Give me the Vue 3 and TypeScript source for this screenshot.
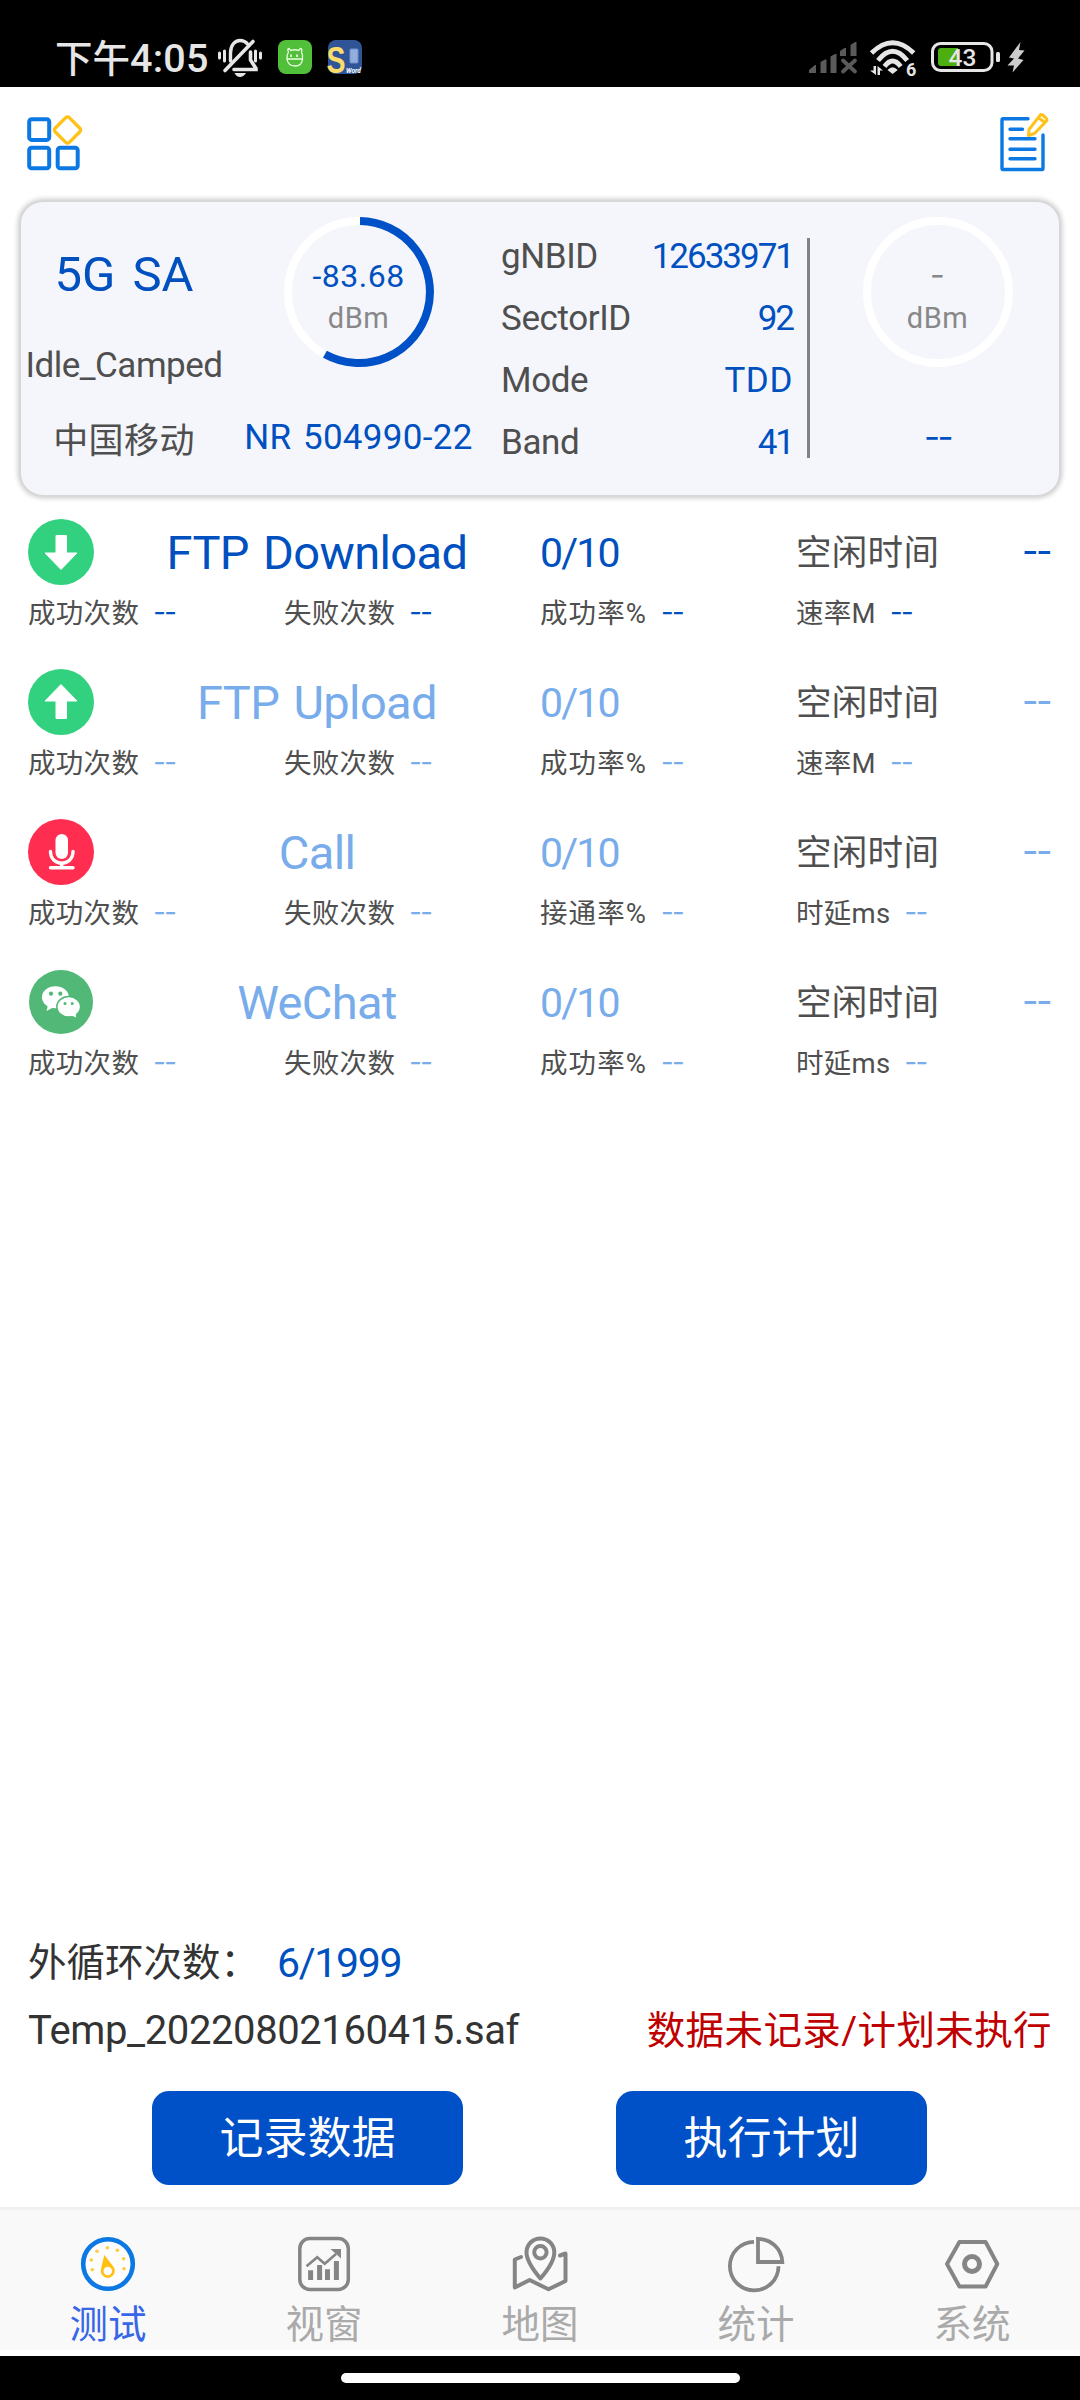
<script setup lang="ts">
interface Task {
  icon: 'down' | 'up' | 'mic' | 'wechat'
  name: string
  active: boolean
  cells: string[]
}

const tasks: Task[] = [
  { icon: 'down', name: 'FTP Download', active: true, cells: ['成功次数', '失败次数', '成功率%', '速率M'] },
  { icon: 'up', name: 'FTP Upload', active: false, cells: ['成功次数', '失败次数', '成功率%', '速率M'] },
  { icon: 'mic', name: 'Call', active: false, cells: ['成功次数', '失败次数', '接通率%', '时延ms'] },
  { icon: 'wechat', name: 'WeChat', active: false, cells: ['成功次数', '失败次数', '成功率%', '时延ms'] },
]

const cellInfo = [
  { key: 'gNBID', value: '12633971' },
  { key: 'SectorID', value: '92' },
  { key: 'Mode', value: 'TDD' },
  { key: 'Band', value: '41' },
]

const tabs = ['测试', '视窗', '地图', '统计', '系统']
</script>

<template>
  <div class="phone">
    <div class="status">
      <span class="clock">下午<span class="clock-digits">4:05</span></span>
      <svg class="bell" width="46" height="42" viewBox="217 37 46 42" fill="none" stroke="#e6e6e6" stroke-width="3" stroke-linecap="round">
        <path d="M230.500 61V53C230.500 45 235 40.500 240 40.500C243.500 40.500 246 42 248 44.500" stroke-width="3.400" />
        <path d="M225 70.500L253 41.500" stroke-width="3.600" />
        <path d="M250.500 52V60L256 68.500V69.500H234" stroke-width="3.600" />
        <path d="M234.500 73H246Q243.500 77 240 77Q236.500 77 234.500 73Z" fill="#e6e6e6" stroke="none" />
        <path d="M219.500 53V58M224.500 51V61M255.500 51V61M260.500 53V58" />
      </svg>
      <svg class="app1" width="34" height="34" viewBox="0 0 34 34">
        <rect width="34" height="34" rx="8" fill="#52bf3a" />
        <path d="M10.500 12Q9 9 11 8.500L13 10.500Q17 9 20.500 10.500L22.500 8.500Q24.500 9 23.500 12Q25 15 24.500 19H9Q8.500 15 10.500 12ZM9 19Q10 26 17 26Q24 26 24.500 19" fill="none" stroke="#e9ffe0" stroke-width="1.300" />
        <path d="M13 14.500V17M19 14.500V17" stroke="#fff" stroke-width="1.500" />
      </svg>
      <svg class="app2" width="34" height="34" viewBox="0 0 34 34">
        <rect width="34" height="34" rx="8" fill="#2f5597" />
        <rect x="22" y="9" width="8" height="14" rx="1" fill="#93aede" stroke="#6f90cc" />
        <text x="-1.500" y="33" font-size="36" textLength="19" lengthAdjust="spacingAndGlyphs" font-weight="700" fill="#fbdc6b" font-family="Liberation Sans, sans-serif">S</text>
        <text x="18" y="33" font-size="6.500" font-weight="700" font-style="italic" fill="#fff" font-family="Roboto, sans-serif">Word</text>
      </svg>
      <span class="grow"></span>
      <svg width="218" height="42" viewBox="808 37 218 42" fill="#e6e6e6">
        <g fill="#5a5a5a">
          <path d="M809 73V70L815 65H816V73ZM820.500 73V62L825 59.500H826.500V73ZM830.500 73V56.500L835 54H836.500V73ZM840 56V51L844.500 48H846V56ZM850.500 56V45L855 42H856.500V56Z" />
          <path d="M843 60.500L855 71.500M855 60.500L843 71.500" stroke="#5a5a5a" stroke-width="3.800" stroke-linecap="round" />
        </g>
        <g fill="none" stroke="#e6e6e6" stroke-width="4.800">
          <path d="M871.500 53Q892.600 32.500 913.700 53" />
          <path d="M878 60.500Q892.600 42 907.200 60.500" />
          <path d="M884.500 66.500Q892.600 55.500 900.700 66.500" />
        </g>
        <path d="M887.500 70Q892.600 64.500 897.700 70L892.600 74Z" />
        <path d="M873.500 66H876V75L870 70.500H873.500ZM877.500 75V66L883 70.500H880V75Z" />
        <text x="906" y="75.500" font-size="18" font-weight="700" font-family="Roboto, sans-serif">6</text>
        <rect x="932.500" y="43.500" width="59.500" height="27" rx="8" fill="none" stroke="#e6e6e6" stroke-width="3" />
        <path d="M941 48H958V66H941Q938 66 938 63V51Q938 48 941 48Z" fill="#4caf10" />
        <text x="948.500" y="65.500" font-size="24.500" font-weight="500" font-family="Roboto, sans-serif">43</text>
        <rect x="996" y="52" width="4" height="10" rx="1.500" />
        <path d="M1020.500 42L1009 57.500L1014 58.500L1007.500 65.500H1014L1012.500 72.500L1023.500 60L1018 58.500L1024.500 50.500L1019 50Z" fill="#ccc" />
      </svg>
    </div>

    <div class="toolbar">
      <svg width="58" height="60" viewBox="26 113 58 60" fill="none" stroke="#0b78e3" stroke-width="4">
        <rect x="29.200" y="119.300" width="20" height="20.600" rx="2.500" />
        <rect x="29.200" y="147.700" width="20" height="20.600" rx="2.500" />
        <rect x="57.700" y="147.700" width="20" height="20.600" rx="2.500" />
        <rect x="57.500" y="120" width="20" height="20" rx="2.500" transform="rotate(45 67.500 130)" stroke="#ffc21a" stroke-width="3.400" />
      </svg>
      <svg width="50" height="60" viewBox="1000 113 50 60" fill="none" stroke="#0b78e3" stroke-width="3.400" stroke-linecap="round" stroke-linejoin="round">
        <path d="M1028 118.800H1003Q1002 118.800 1002 120V168.300Q1002 169.500 1003 169.500H1042Q1043 169.500 1043 168.300V135" />
        <path d="M1010 129.300H1022.500M1010 138.800H1035M1010 149.300H1035M1010 158.800H1035" />
        <path d="M1028.500 135.500L1029 129.500L1040 115.300Q1041 114 1042.500 115L1046 118Q1047.500 119.500 1046.500 121L1034.500 133.500ZM1039.500 118.500L1043.500 121.500" stroke="#ffc21a" stroke-width="3" />
      </svg>
    </div>

    <section class="card">
      <div class="col-net">
        <div class="net">5G SA</div>
        <div class="state">Idle_Camped</div>
        <div class="carrier">中国移动</div>
      </div>
      <div class="col-gauge">
        <div class="gauge">
          <svg class="ring" width="150" height="150" viewBox="0 0 150 150" fill="none" stroke-width="8">
            <circle cx="75" cy="75" r="71" stroke="#fff" />
            <path d="M76 4A71 71 0 1 1 40.900 137.300" stroke="#0050c8" />
          </svg>
          <div class="level">-83.68</div>
          <div class="unit">dBm</div>
        </div>
        <div class="arfcn">NR 504990-22</div>
      </div>
      <div class="col-info">
        <div v-for="i in cellInfo" :key="i.key" class="kv">
          <span class="key">{{ i.key }}</span><span class="val" :class="{ wide: i.key === 'Mode' }">{{ i.value }}</span>
        </div>
      </div>
      <div class="rule"></div>
      <div class="col-gauge second">
        <div class="gauge">
          <svg class="ring" width="150" height="150" viewBox="0 0 150 150" fill="none" stroke-width="8">
            <circle cx="75" cy="75" r="71" stroke="#fff" />
          </svg>
          <div class="level none">-</div>
          <div class="unit">dBm</div>
        </div>
        <div class="arfcn dash">--</div>
      </div>
    </section>

    <section class="tasks">
      <div v-for="t in tasks" :key="t.name" class="task" :class="{ active: t.active }">
        <div class="head">
          <svg width="66" height="66" viewBox="0 0 66 66">
            <template v-if="t.icon === 'down'">
              <circle cx="33" cy="33" r="33" fill="#31d17f" />
              <path d="M28 16.500H38.500V34H49L33 50.500L17 34H28Z" fill="#fff" stroke="#fff" stroke-linejoin="round" />
            </template>
            <template v-else-if="t.icon === 'up'">
              <circle cx="33" cy="33" r="33" fill="#31d17f" />
              <path d="M28 49.500H38.500V32H49L33 15.500L17 32H28Z" fill="#fff" stroke="#fff" stroke-linejoin="round" />
            </template>
            <template v-else-if="t.icon === 'mic'">
              <circle cx="33" cy="33" r="33" fill="#ff2d50" />
              <rect x="27.500" y="15" width="12.500" height="25" rx="6.250" fill="#fff" />
              <path d="M22.500 32.500C22.500 48 45 48 45 32.500M33.700 44V48M22.500 48.700H45" fill="none" stroke="#fff" stroke-width="3.400" stroke-linecap="round" />
            </template>
            <template v-else>
              <circle cx="33" cy="33" r="32" fill="#52b877" />
              <path d="M20 36L18.500 42L26 38Z" fill="#fff" />
              <ellipse cx="27.400" cy="28.300" rx="13.500" ry="11" fill="#fff" />
              <circle cx="23" cy="24.700" r="2.100" fill="#52b877" /><circle cx="32.300" cy="24.700" r="2.100" fill="#52b877" />
              <ellipse cx="40.700" cy="37.800" rx="11.900" ry="10.200" fill="#fff" stroke="#52b877" stroke-width="1.500" />
              <path d="M42 46L48.200 48.500L47.500 43Z" fill="#fff" />
              <circle cx="37" cy="34.500" r="1.500" fill="#52b877" /><circle cx="44.200" cy="34.500" r="1.500" fill="#52b877" />
            </template>
          </svg>
          <span class="name">{{ t.name }}</span>
          <span class="count">0/10</span>
          <span class="idle">空闲时间</span>
          <span class="idle-val">--</span>
        </div>
        <div class="stats">
          <div v-for="c in t.cells" :key="c" class="stat"><span :class="{ pct: c.endsWith('%') }">{{ c }}</span><span class="stat-val">--</span></div>
        </div>
      </div>
    </section>

    <div class="spacer"></div>

    <div class="loop"><span class="loop-label">外循环次数：</span><span class="loop-val">6/1999</span></div>
    <div class="file"><span class="file-name">Temp_20220802160415.saf</span><span class="warn">数据未记录/计划未执行</span></div>
    <div class="actions"><button>记录数据</button><button>执行计划</button></div>

    <nav class="tabs">
      <div v-for="(tab, i) in tabs" :key="tab" class="tab" :class="{ on: i === 0 }">
        <svg v-if="i === 0" width="60" height="60" viewBox="78 2234 60 60">
          <circle cx="108" cy="2264" r="24.800" fill="#fdfdfd" stroke="#0b78e3" stroke-width="4.600" />
          <g fill="#ffcb45"><circle cx="107.400" cy="2247.700" r="1.800" /><circle cx="97" cy="2251.300" r="1.800" /><circle cx="117.400" cy="2250.300" r="1.800" /><circle cx="91.300" cy="2260" r="1.800" /><circle cx="123.600" cy="2258.700" r="1.800" /><circle cx="92.300" cy="2269.700" r="1.800" /><circle cx="124" cy="2268.700" r="1.800" /></g>
          <path d="M104.300 2255L113.300 2266.500A7 7 0 1 1 101 2269Z" fill="#ffc010" />
          <circle cx="107.800" cy="2271" r="4.300" fill="#fff" />
        </svg>
        <svg v-else-if="i === 1" width="60" height="60" viewBox="294 2234 60 60" fill="none" stroke="#858585">
          <rect x="299.800" y="2238.500" width="48.500" height="51" rx="10" stroke-width="3.500" />
          <path d="M310.600 2280V2270.300M319.600 2280V2265M327.500 2280V2269.300M336.400 2280V2261" stroke-width="5" />
          <path d="M306.500 2266.300L317.200 2257.300L324.700 2263.700L336 2254" stroke-width="2.600" />
          <path d="M330.500 2249H341V2258.500Z" fill="#858585" stroke="none" />
        </svg>
        <svg v-else-if="i === 2" width="60" height="60" viewBox="510 2234 60 60" fill="none" stroke="#858585" stroke-width="4" stroke-linecap="round" stroke-linejoin="round">
          <path d="M540.400 2278.500C534 2271 526.500 2260 526.500 2252.300A13.900 13.900 0 0 1 554.300 2252.300C554.300 2260 547 2271 540.400 2278.500Z" />
          <circle cx="540.400" cy="2252.300" r="6.200" />
          <path d="M521 2257L514.800 2259.500V2287.500L529.600 2280L548.500 2289.300L565.500 2281V2253.500L560 2255.500" />
        </svg>
        <svg v-else-if="i === 3" width="60" height="60" viewBox="726 2234 60 60" fill="none" stroke="#858585" stroke-width="3.800">
          <path d="M754 2241.800A24.300 24.300 0 1 0 778.500 2266.200" />
          <path d="M758 2238.800V2262H782.300C781.500 2248 771 2239.500 758 2238.800Z" />
        </svg>
        <svg v-else width="60" height="60" viewBox="942 2234 60 60" fill="none" stroke="#858585" stroke-linejoin="round">
          <path d="M947 2264L959.400 2242H985.600L997.300 2264L985.600 2286.500H959.400Z" stroke-width="3.900" />
          <circle cx="972" cy="2264" r="7.500" stroke-width="5" />
        </svg>
        <span>{{ tab }}</span>
      </div>
    </nav>
    <div class="homebar"><i></i></div>
  </div>
</template>

<style>
body { margin: 0; background: #fff; }
</style>

<style scoped>
.phone { width: 1080px; height: 2400px; display: flex; flex-direction: column; background: #fff; color: #4f4f4f; font-family: Roboto, 'Noto Sans CJK SC', sans-serif; overflow: hidden; white-space: nowrap; }
svg { display: block; flex: none; overflow: visible; }
.status { height: 87px; box-sizing: border-box; padding: 37px 54px 0 55px; background: #000; display: flex; align-items: flex-start; color: #e6e6e6; }
.clock { width: 162px; font-size: 37.500px; line-height: 43px; font-weight: 500; }
.clock-digits { font-size: 39.500px; letter-spacing: 0.2px; }
.app1, .app2 { margin: 3px 0 0 15px; }
.app2 { margin-left: 16px; }
.grow, .spacer { flex: 1; }
.toolbar { height: 115px; box-sizing: border-box; padding: 26px 30px 0 26px; display: flex; justify-content: space-between; }
.card { margin: 0 21px; height: 293px; background: #f5f6fb; border-radius: 22px; display: flex; box-shadow: 0 0 0 1px #d8d8d8, 0 0 5px 3px #c9c9c9; }
.col-net { width: 206px; padding-top: 43px; text-align: center; }
.net { font-size: 49px; line-height: 60px; color: #0050c0; word-spacing: 5px; }
.state { margin-top: 36px; font-size: 35px; line-height: 50px; letter-spacing: -0.5px; }
.carrier { margin-top: 26px; font-size: 35px; line-height: 50px; letter-spacing: 0.4px; }
.col-gauge { width: 263px; padding-top: 15px; display: flex; flex-direction: column; align-items: center; }
.second { width: 255px; margin-right: -6px; }
.gauge { position: relative; width: 150px; height: 150px; box-sizing: border-box; padding-top: 39px; text-align: center; }
.ring { position: absolute; left: 0; top: 0; }
.level { position: relative; font-size: 32px; line-height: 40px; letter-spacing: 0.5px; color: #0050c0; }
.none { font-family: Inter, Roboto, sans-serif; color: #888; line-height: 37px; padding-bottom: 3px; }
.unit { position: relative; margin-top: 2px; font-size: 29px; line-height: 40px; letter-spacing: 0.5px; color: #888; }
.arfcn { margin-top: 46px; font-size: 35px; line-height: 50px; letter-spacing: 0.3px; word-spacing: 2.500px; color: #0050c0; }
.dash { font-family: Inter, Roboto, sans-serif; letter-spacing: -2.5px; line-height: 46px; }
.col-info { margin-left: 11px; width: 292px; padding-top: 24px; font-size: 35px; }
.kv { display: flex; justify-content: space-between; line-height: 62px; }
.key { letter-spacing: -0.4px; }
.val { color: #0050c0; letter-spacing: -2px; }
.val.wide { letter-spacing: 0.6px; }
.rule { width: 3px; height: 220px; margin: 36px 0 0 14px; background: #828282; }
.tasks { padding: 24px 28px 0; }
.task { height: 150px; --num: #78acea; }
.task.active { --num: #0050c0; }
.head { display: flex; align-items: center; height: 66px; line-height: 66px; }
.name { width: 446px; text-align: center; font-size: 47px; letter-spacing: -0.6px; word-spacing: 3px; padding-top: 1px; color: var(--num); }
.count { width: 256px; font-size: 41px; letter-spacing: -1.8px; padding-top: 1px; color: var(--num); }
.idle { padding-top: 2px; font-size: 35.500px; letter-spacing: 0.3px; }
.idle-val { margin-left: auto; font-family: Inter, Roboto, sans-serif; font-size: 36px; letter-spacing: -2.6px; padding-right: 2px; line-height: 64px; padding-bottom: 2px; color: var(--num); }
.stats { margin-top: 14px; display: flex; }
.stat { width: 256px; display: flex; align-items: center; gap: 14px; font-size: 27.500px; line-height: 30px; letter-spacing: 0.3px; }
.pct { letter-spacing: 1.1px; }
.stat-val { font-family: Inter, Roboto, sans-serif; letter-spacing: -1.6px; line-height: 27px; padding-bottom: 3px; color: var(--num); }
.loop { margin: 0 28px; height: 60px; display: flex; align-items: center; line-height: 60px; color: #333; }
.loop-label { width: 249px; font-size: 38.500px; }
.loop-val { font-size: 41px; letter-spacing: -1.3px; color: #0050c0; }
.file { margin: 8px 28px 0; height: 60px; display: flex; align-items: center; justify-content: space-between; line-height: 60px; color: #333; }
.file-name { font-size: 40px; letter-spacing: -0.4px; }
.warn { font-size: 38.500px; letter-spacing: 0.4px; color: #c00000; }
.actions { margin: 30px 153px 22px 152px; display: flex; justify-content: space-between; }
button { width: 311px; height: 94px; padding: 3px 0 0; border: 0; border-radius: 17px; background: #0050c8; color: #fff; font-family: inherit; font-size: 44px; line-height: 91px; }
.tabs { height: 149px; box-sizing: border-box; border-top: 3px solid #f0f0f0; border-bottom: 6px solid #fff; background: #f9f9f9; display: flex; }
.tab { width: 216px; padding-top: 24px; display: flex; flex-direction: column; align-items: center; font-size: 38.500px; line-height: 50px; color: #aaa; }
.tab span { margin-top: 6px; }
.on { color: #3766e8; }
.homebar { height: 44px; background: #000; display: flex; justify-content: center; padding-top: 17px; box-sizing: border-box; }
.homebar i { width: 399px; height: 10px; border-radius: 5px; background: #fff; }
</style>
